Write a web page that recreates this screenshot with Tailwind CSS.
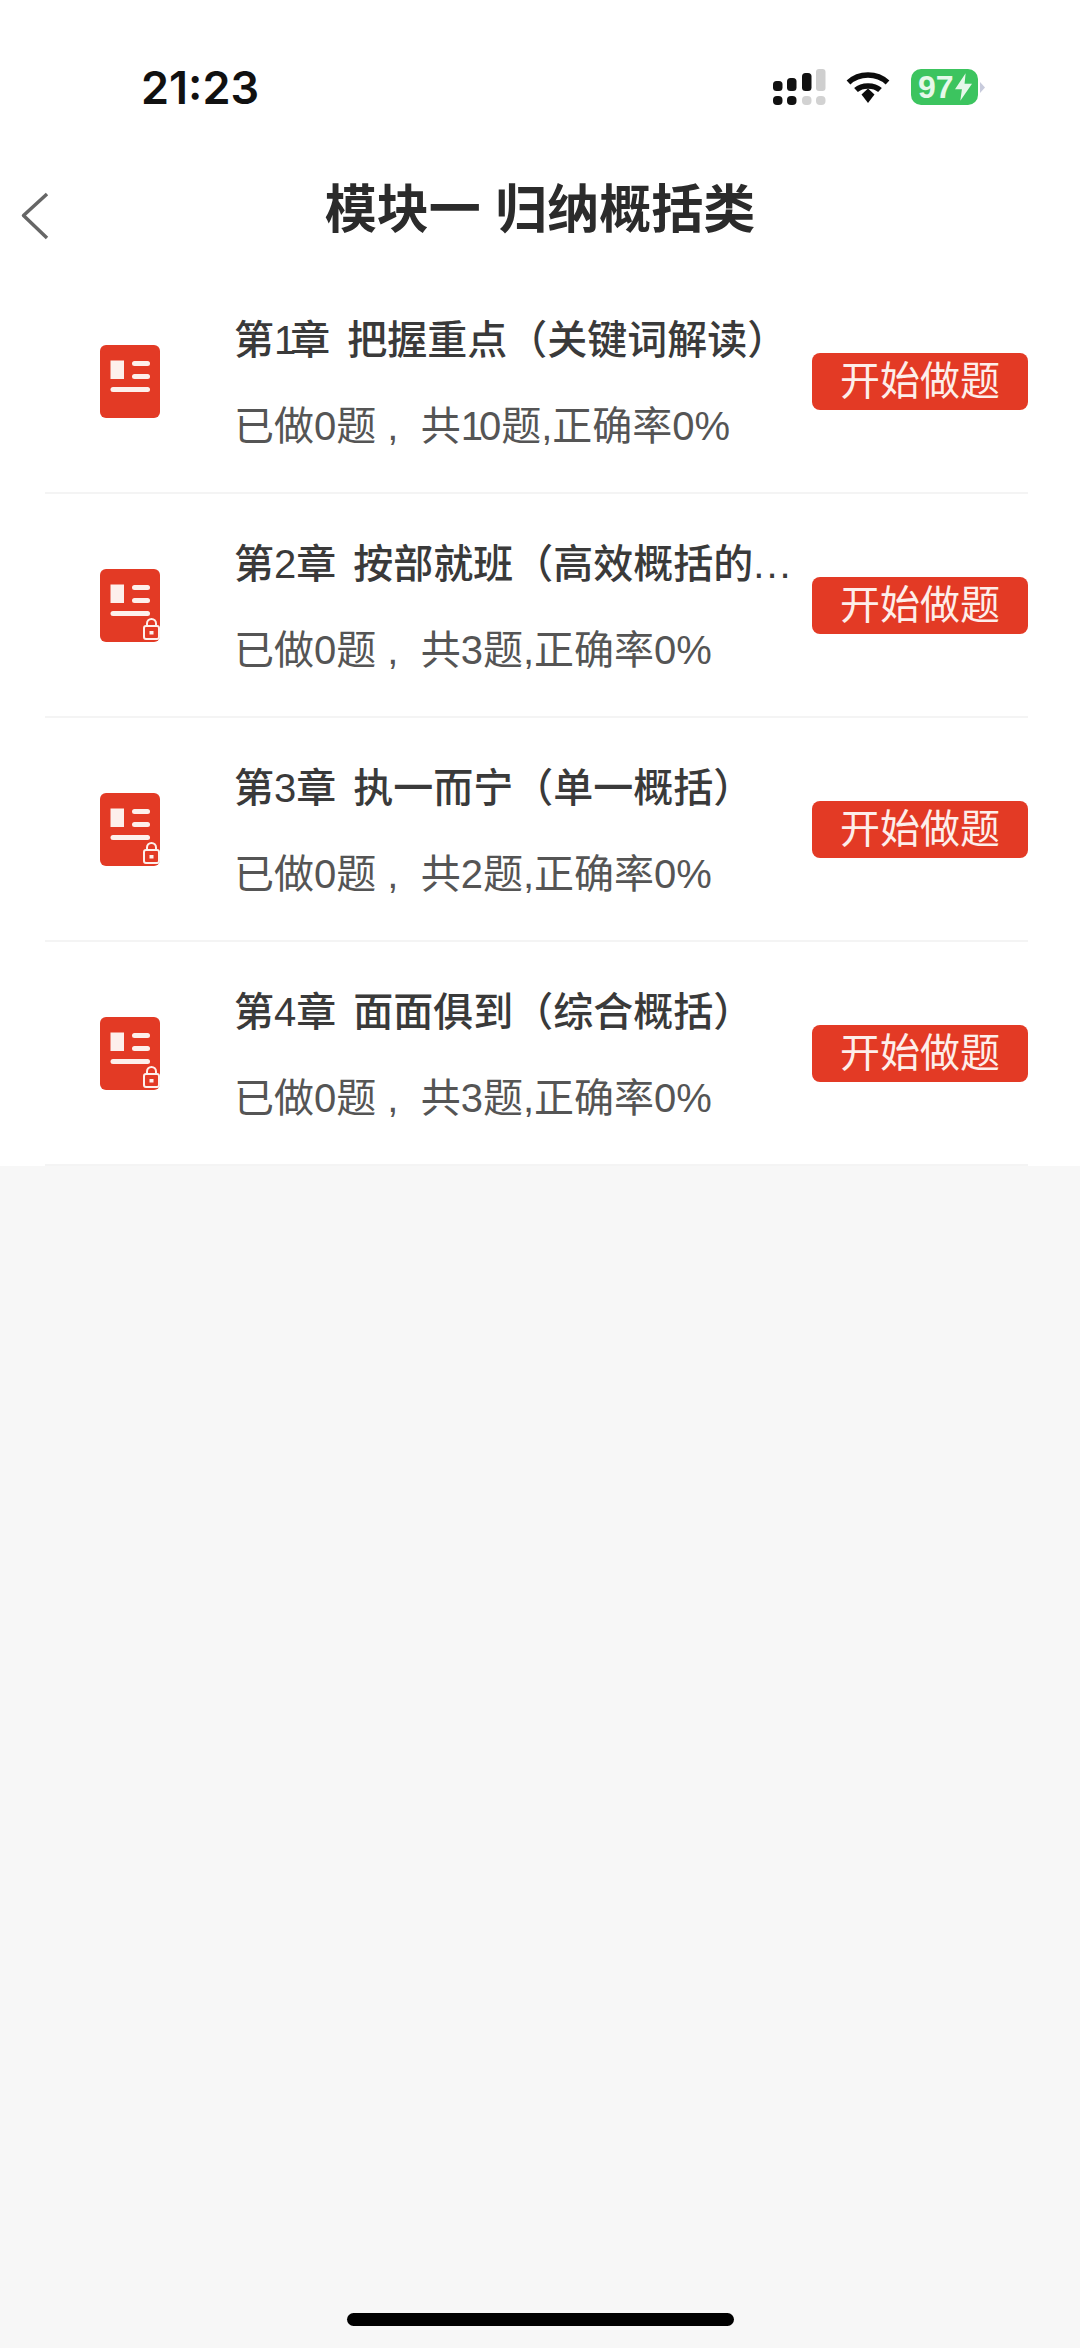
<!DOCTYPE html>
<html lang="zh-CN">
  <head>
    <meta charset="UTF-8" />
    <title>模块一 归纳概括类</title>
    <meta name="viewport" content="width=device-width, initial-scale=1.0" />
    <script src="https://cdn.jsdelivr.net/npm/@tailwindcss/browser@4"></script>
  </head>
  <body class="relative w-[1080px] h-[2348px] overflow-hidden bg-[#f7f7f7] font-['Liberation_Sans','Noto_Sans_CJK_SC',sans-serif]">
    <div class="bg-white">
      <!-- 状态栏 -->
      <div class="h-[149px] pt-[69px] pl-[141px] pr-[95px] flex items-start justify-between">
        <span class="font-['Inter',sans-serif] text-[45px] leading-[38px] font-semibold text-[#111]">21:23</span>
        <div class="flex items-start">
          <svg width="53" height="36" viewBox="0 0 53 36" fill="#111">
            <rect x="0" y="12" width="9.5" height="10" rx="3.5" />
            <rect x="14" y="9" width="9.5" height="13" rx="3.5" />
            <rect x="29" y="4" width="9.5" height="18" rx="3.5" />
            <rect x="43" y="0" width="9.5" height="22" rx="3" fill="#cfcfcf" />
            <rect x="0" y="27" width="9.5" height="9" rx="4" />
            <rect x="14" y="27" width="9.5" height="9" rx="4" />
            <rect x="29" y="27" width="9.5" height="9" rx="4" fill="#d2d2d2" />
            <rect x="43" y="27" width="9.5" height="9" rx="4" fill="#d2d2d2" />
          </svg>
          <svg class="ml-[20px] mt-[2px]" width="44" height="33" viewBox="0 0 44 33" fill="none" stroke="#0c0c0c" stroke-width="5.5">
            <path d="M2.5 11.5 C13 1.5 31 1.5 41.5 11.5" />
            <path d="M10 19 C16 13.5 28 13.5 34 19" />
            <path d="M15.5 23.5 L22 17.5 L28.5 23.5 L22 32 Z" fill="#0c0c0c" stroke="none" />
          </svg>
          <div class="ml-[21px] w-[67px] h-[36px] rounded-[10px] bg-[#3cc45f] flex items-center pl-[7px] text-[32px] leading-none font-bold text-[#e6f8ea]">
            <span>97</span>
            <svg class="ml-px" width="17" height="28" viewBox="0 0 16 26" fill="#e6f8ea"><path d="M10 0 L0 15 H6.5 L5 26 L16 10 H9 Z" /></svg>
          </div>
          <div class="ml-[2px] mt-[13px] w-[5px] h-[11px] bg-[#c8cbdc] [clip-path:polygon(0_0,100%_50%,0_100%)]"></div>
        </div>
      </div>

      <!-- 导航栏 -->
      <div class="relative h-[121px] flex items-center justify-center">
        <svg class="absolute left-[20px] top-[43px]" width="29" height="48" viewBox="0 0 29 48" fill="none" stroke="#666" stroke-width="3.5" stroke-linejoin="round">
          <path d="M27 2 L3.5 23.5 L27 46" />
        </svg>
        <h1 class="text-[52px] leading-none font-bold text-[#2b2b2b]">模块一 归纳概括类</h1>
      </div>

      <!-- 章节列表 -->
      <ul class="ml-[45px] mr-[52px]">
        <li class="h-[224px] flex items-center border-b-2 border-[#f4f4f4]">
          <div class="relative ml-[55px] w-[60px] h-[73px] shrink-0 rounded-[6px] bg-[#e33a25]">
            <svg width="60" height="73" viewBox="0 0 60 73" fill="#fdf0ec">
              <rect x="10.5" y="15.5" width="13.5" height="18.5" />
              <rect x="32" y="16" width="18" height="5" rx="2.5" />
              <rect x="32" y="29" width="18" height="5" rx="2.5" />
              <rect x="10.5" y="42" width="39.5" height="5" rx="2.5" />
            </svg>
          </div>
          <div class="ml-[74px] mt-[3px] w-[562px] shrink-0">
            <p class="text-[40px] leading-[46px] font-medium text-[#3a3a3a] whitespace-nowrap [word-spacing:6px]">第<span class="tracking-[-6px]">1</span>章 把握重点（关键词解读）</p>
            <p class="mt-[40px] text-[40px] leading-[46px] text-[#555] whitespace-nowrap">已做0题 ,&nbsp; 共<span class="tracking-[-4px]">1</span>0题,正确率0%</p>
          </div>
          <button class="ml-auto w-[216px] h-[57px] rounded-[8px] bg-[#e33a25] text-[40px] leading-none text-[#fdeeea]">开始做题</button>
        </li>
        <li class="h-[224px] flex items-center border-b-2 border-[#f4f4f4]">
          <div class="relative ml-[55px] w-[60px] h-[73px] shrink-0 rounded-[6px] bg-[#e33a25]">
            <svg width="60" height="73" viewBox="0 0 60 73" fill="#fdf0ec">
              <rect x="10.5" y="15.5" width="13.5" height="18.5" />
              <rect x="32" y="16" width="18" height="5" rx="2.5" />
              <rect x="32" y="29" width="18" height="5" rx="2.5" />
              <rect x="10.5" y="42" width="39.5" height="5" rx="2.5" />
              <path d="M47 57 V54.5 a4.5 4.5 0 0 1 9 0 V57" fill="none" stroke="#fdf0ec" stroke-width="2" />
              <rect x="44" y="57" width="15" height="13" rx="2" fill="none" stroke="#fdf0ec" stroke-width="2" />
              <rect x="49.5" y="62" width="4" height="3.5" />
            </svg>
          </div>
          <div class="ml-[74px] mt-[3px] w-[562px] shrink-0">
            <p class="text-[40px] leading-[46px] font-medium text-[#3a3a3a] whitespace-nowrap [word-spacing:6px]">第2章 按部就班（高效概括的<span class="tracking-[2px]">...</span></p>
            <p class="mt-[40px] text-[40px] leading-[46px] text-[#555] whitespace-nowrap">已做0题 ,&nbsp; 共3题,正确率0%</p>
          </div>
          <button class="ml-auto w-[216px] h-[57px] rounded-[8px] bg-[#e33a25] text-[40px] leading-none text-[#fdeeea]">开始做题</button>
        </li>
        <li class="h-[224px] flex items-center border-b-2 border-[#f4f4f4]">
          <div class="relative ml-[55px] w-[60px] h-[73px] shrink-0 rounded-[6px] bg-[#e33a25]">
            <svg width="60" height="73" viewBox="0 0 60 73" fill="#fdf0ec">
              <rect x="10.5" y="15.5" width="13.5" height="18.5" />
              <rect x="32" y="16" width="18" height="5" rx="2.5" />
              <rect x="32" y="29" width="18" height="5" rx="2.5" />
              <rect x="10.5" y="42" width="39.5" height="5" rx="2.5" />
              <path d="M47 57 V54.5 a4.5 4.5 0 0 1 9 0 V57" fill="none" stroke="#fdf0ec" stroke-width="2" />
              <rect x="44" y="57" width="15" height="13" rx="2" fill="none" stroke="#fdf0ec" stroke-width="2" />
              <rect x="49.5" y="62" width="4" height="3.5" />
            </svg>
          </div>
          <div class="ml-[74px] mt-[3px] w-[562px] shrink-0">
            <p class="text-[40px] leading-[46px] font-medium text-[#3a3a3a] whitespace-nowrap [word-spacing:6px]">第3章 执一而宁（单一概括）</p>
            <p class="mt-[40px] text-[40px] leading-[46px] text-[#555] whitespace-nowrap">已做0题 ,&nbsp; 共2题,正确率0%</p>
          </div>
          <button class="ml-auto w-[216px] h-[57px] rounded-[8px] bg-[#e33a25] text-[40px] leading-none text-[#fdeeea]">开始做题</button>
        </li>
        <li class="h-[224px] flex items-center border-b-2 border-[#f4f4f4]">
          <div class="relative ml-[55px] w-[60px] h-[73px] shrink-0 rounded-[6px] bg-[#e33a25]">
            <svg width="60" height="73" viewBox="0 0 60 73" fill="#fdf0ec">
              <rect x="10.5" y="15.5" width="13.5" height="18.5" />
              <rect x="32" y="16" width="18" height="5" rx="2.5" />
              <rect x="32" y="29" width="18" height="5" rx="2.5" />
              <rect x="10.5" y="42" width="39.5" height="5" rx="2.5" />
              <path d="M47 57 V54.5 a4.5 4.5 0 0 1 9 0 V57" fill="none" stroke="#fdf0ec" stroke-width="2" />
              <rect x="44" y="57" width="15" height="13" rx="2" fill="none" stroke="#fdf0ec" stroke-width="2" />
              <rect x="49.5" y="62" width="4" height="3.5" />
            </svg>
          </div>
          <div class="ml-[74px] mt-[3px] w-[562px] shrink-0">
            <p class="text-[40px] leading-[46px] font-medium text-[#3a3a3a] whitespace-nowrap [word-spacing:6px]">第4章 面面俱到（综合概括）</p>
            <p class="mt-[40px] text-[40px] leading-[46px] text-[#555] whitespace-nowrap">已做0题 ,&nbsp; 共3题,正确率0%</p>
          </div>
          <button class="ml-auto w-[216px] h-[57px] rounded-[8px] bg-[#e33a25] text-[40px] leading-none text-[#fdeeea]">开始做题</button>
        </li>
      </ul>
    </div>

    <!-- Home 指示条 -->
    <div class="absolute left-[347px] top-[2313px] w-[387px] h-[13px] rounded-[7px] bg-black"></div>
  </body>
</html>
